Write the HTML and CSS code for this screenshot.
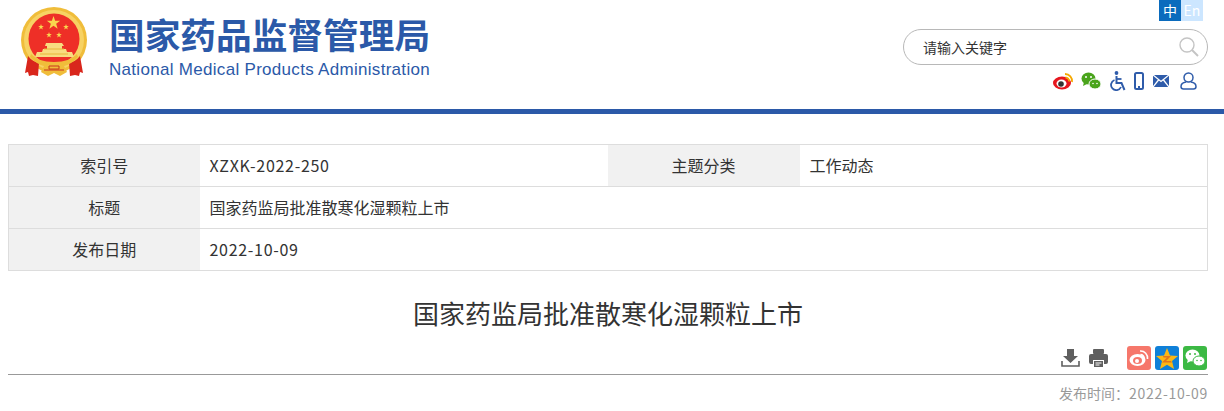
FILE: index.html
```html
<!DOCTYPE html>
<html lang="zh-CN">
<head>
  <meta charset="UTF-8" />
  <title>国家药监局批准散寒化湿颗粒上市</title>
  <link rel="stylesheet" href="styles.css">
</head>
<body>
  <header class="header">
    <div class="brand">
      <svg class="emblem" width="68" height="72" viewBox="0 0 68 72">
        <defs>
          <path id="star" d="M0-10L2.350-3.240 9.510-3.090 3.800 1.240 5.880 8.090 0 4-5.880 8.090-3.800 1.240-9.510-3.090-2.350-3.240Z"/>
        </defs>
        <circle cx="34" cy="34" r="33" fill="#f0bd3a"/>
        <circle cx="34" cy="34" r="30" fill="#f7d263"/>
        <circle cx="34" cy="33" r="25.500" fill="#ee2f27"/>
        <g fill="#f9d64e">
          <use href="#star" transform="translate(33.500 17) scale(.7)"/>
          <use href="#star" transform="translate(21 21) scale(.3)"/>
          <use href="#star" transform="translate(46 21) scale(.3)"/>
          <use href="#star" transform="translate(29 29) scale(.3)"/>
          <use href="#star" transform="translate(39 29) scale(.3)"/>
        </g>
        <path d="M26 37h16l2 3h-2v3h4l1 3h5l2 5H15l2-5h5l1-3h4v-3h-2z" fill="#f8dc80"/>
        <path d="M24 43h20M20 48h28" stroke="#e8b63a" fill="none"/>
        <path d="M8 50c3 4 7 6 11 7l-1 13-5-1-4 1-1-4-3 1z" fill="#d9261c"/>
        <path d="M60 50c-3 4-7 6-11 7l1 13 5-1 4 1 1-4 3 1z" fill="#d9261c"/>
        <path d="M11 48c5 5 12 8 23 8s18-3 23-8l1 3c-4 5-10 8-14 9l3 6-7 4-6-3-6 3-7-4 3-6c-4-1-10-4-14-9z" fill="#f0bd3a"/>
        <path d="M29 60h10v3H29zM24 64h20" stroke="#c9361f" stroke-width="1" fill="none"/>
      </svg>
      <div class="brand-text">
        <div class="brand-cn">国家药品监督管理局</div>
        <div class="brand-en">National Medical Products Administration</div>
      </div>
    </div>
    <div class="tools">
      <div class="lang"><span class="lang-on">中</span><span class="lang-off">En</span></div>
      <div class="search">
        <span class="search-text">请输入关键字</span>
        <svg width="20" height="20" viewBox="0 0 20 20" fill="none" stroke="#c4c4c4">
          <circle cx="8" cy="8" r="7" stroke-width="1.400"/>
          <path d="M13 13l6 6" stroke-width="2"/>
        </svg>
      </div>
      <div class="links">
        <svg class="ic-weibo" width="21" height="18" viewBox="0 0 21 18">
          <ellipse cx="9" cy="11" rx="9" ry="6.500" fill="#e6161e"/>
          <ellipse cx="8.500" cy="11.500" rx="5" ry="4" fill="#fff"/>
          <circle cx="8" cy="12" r="2.800" fill="#333"/>
          <path d="M12 2a7 7 0 0 1 7 8M12.500 5.500a3.500 3.500 0 0 1 3.500 4" fill="none" stroke="#f5a800" stroke-width="1.800"/>
        </svg>
        <svg class="ic-wechat" width="20" height="18" viewBox="0 0 20 18">
          <ellipse cx="7.500" cy="6.500" rx="7" ry="6" fill="#4aa41c"/>
          <path d="M3 10l-1 4 4-2z" fill="#4aa41c"/>
          <ellipse cx="14" cy="12" rx="6" ry="5" fill="#4aa41c" stroke="#fff"/>
          <circle cx="5" cy="5" r="1" fill="#fff"/><circle cx="10" cy="5" r="1" fill="#fff"/>
          <circle cx="12" cy="11.500" r=".8" fill="#fff"/><circle cx="16" cy="11.500" r=".8" fill="#fff"/>
        </svg>
        <svg class="ic-access" width="17" height="20" viewBox="0 0 17 20" fill="none" stroke="#2f5caa" stroke-width="1.800">
          <circle cx="6.500" cy="2" r="1.900" fill="#2f5caa" stroke="none"/>
          <path d="M6.500 5v7h5l3 7" stroke-width="2"/>
          <path d="M6.500 8h5"/>
          <path d="M4.500 9a5.200 5.200 0 1 0 6.500 7"/>
        </svg>
        <svg class="ic-phone" width="10" height="18" viewBox="0 0 10 18">
          <rect x="1" y="1" width="8" height="16" rx="1.500" fill="#fff" stroke="#2f5caa" stroke-width="2"/>
          <rect x="4" y="14" width="2" height="2" fill="#2f5caa"/>
        </svg>
        <svg class="ic-mail" width="16" height="12" viewBox="0 0 16 12">
          <rect width="16" height="12" fill="#2f5caa"/>
          <path d="M0 0l8 6.500L16 0M0 12l5.500-7M16 12l-5.500-7" fill="none" stroke="#fff" stroke-width="1.300"/>
        </svg>
        <svg class="ic-user" width="17" height="18" viewBox="0 0 17 18" fill="none" stroke="#2f5caa" stroke-width="1.500">
          <circle cx="8.500" cy="5.500" r="4.500"/>
          <path d="M6 10c-3 .5-5 2.500-5 4.500 0 1.500 1 2.500 2.500 2.500h10c1.500 0 2.500-1 2.500-2.500 0-2-2-4-5-4.500"/>
        </svg>
      </div>
    </div>
  </header>

  <main class="content">
    <table class="meta">
      <tr>
        <th class="col-a">索引号</th><td class="col-b num">XZXK-2022-250</td>
        <th class="col-c">主题分类</th><td>工作动态</td>
      </tr>
      <tr>
        <th>标题</th><td colspan="3">国家药监局批准散寒化湿颗粒上市</td>
      </tr>
      <tr>
        <th>发布日期</th><td colspan="3" class="num">2022-10-09</td>
      </tr>
    </table>

    <h1 class="title">国家药监局批准散寒化湿颗粒上市</h1>

    <div class="actions">
      <svg class="act-download" width="19" height="18" viewBox="0 0 19 18" fill="#5f5f5f">
        <path d="M6 0h7v7h4l-7.500 7L2 7h4z"/>
        <path d="M1 12v5h17v-5" fill="none" stroke="#5f5f5f" stroke-width="1.600"/>
      </svg>
      <svg class="act-print" width="19" height="18" viewBox="0 0 19 18" fill="#5f5f5f">
        <rect x="4" y="0" width="11" height="5" rx="1"/>
        <path d="M2 5h15a2 2 0 0 1 2 2v6a2 2 0 0 1-2 2h-2v-4H4v4H2a2 2 0 0 1-2-2V7a2 2 0 0 1 2-2z"/>
        <rect x="5" y="12" width="9" height="6" fill="#5f5f5f"/>
        <path d="M6.500 14h6M6.500 16h4" stroke="#fff"/>
      </svg>
      <span class="share share-weibo">
        <svg width="20" height="18" viewBox="0 0 20 18">
          <ellipse cx="8.500" cy="11" rx="8" ry="6" fill="#fff"/>
          <ellipse cx="8.500" cy="11.500" rx="4.500" ry="3.500" fill="#f6776b"/>
          <circle cx="8" cy="12" r="2" fill="#fff"/>
          <path d="M11 2a7 7 0 0 1 7.500 8M11.500 5.500a3.500 3.500 0 0 1 3.500 4" fill="none" stroke="#fff" stroke-width="1.600"/>
        </svg>
      </span>
      <span class="share share-qzone">
        <svg width="22" height="21" viewBox="0 0 22 21">
          <path d="M11 0l3 7.500 8 .5-6 5 2 8-7-4.300L4 21l2-8-6-5 8-.5z" fill="#fbb714"/>
          <path d="M7 8h8l-5 5h5l1 1.500H6l5-5H7.500z" fill="#e2761a"/>
        </svg>
      </span>
      <span class="share share-wechat">
        <svg width="20" height="18" viewBox="0 0 20 18">
          <ellipse cx="7.500" cy="6.500" rx="7" ry="6" fill="#fff"/>
          <path d="M3 10l-1 4 4-2z" fill="#fff"/>
          <ellipse cx="14" cy="12" rx="6" ry="5" fill="#fff" stroke="#3cb944"/>
          <circle cx="5" cy="5" r="1" fill="#3cb944"/><circle cx="10" cy="5" r="1" fill="#3cb944"/>
          <circle cx="12" cy="11.500" r=".8" fill="#3cb944"/><circle cx="16" cy="11.500" r=".8" fill="#3cb944"/>
        </svg>
      </span>
    </div>
    <div class="pubtime">发布时间：<span class="num">2022-10-09</span></div>
  </main>
</body>
</html>
```

FILE: styles.css
```css
* { margin: 0; padding: 0; box-sizing: border-box; }
body {
  font-family: "Noto Sans CJK SC", "Liberation Sans", sans-serif;
  background: #fff;
  color: #333;
  overflow: hidden;
}

.header {
  height: 114px;
  border-bottom: 5px solid #2b59a8;
  display: flex;
  justify-content: space-between;
  padding: 0 16px 0 20px;
}
.brand {
  display: flex;
  align-items: flex-start;
}
.emblem { margin-top: 6px; }
.brand-text { margin-left: 21px; }
.brand-cn {
  margin-top: 9px;
  font-size: 35.700px;
  line-height: 50px;
  font-weight: 700;
  color: #2b59a8;
  white-space: nowrap;
}
.brand-en {
  margin-top: 2px;
  font-family: "Liberation Sans", sans-serif;
  font-size: 17px;
  line-height: 18px;
  color: #2b59a8;
  letter-spacing: .3px;
  white-space: nowrap;
}

.tools {
  width: 305px;
  display: flex;
  flex-direction: column;
}
.lang {
  display: flex;
  align-self: flex-end;
  margin-right: 5px;
  font-size: 14px;
  line-height: 21px;
  text-align: center;
  color: #fff;
}
.lang span { width: 22px; height: 21px; }
.lang-on { background: #0a6bbd; }
.lang-off { background: #cce6ff; }
.search {
  margin-top: 8px;
  height: 36px;
  border: 1px solid #b8b8b8;
  border-radius: 18px;
  display: flex;
  align-items: center;
  justify-content: space-between;
  padding: 0 8px 0 19px;
}
.search-text { font-size: 14px; color: #333; }
.links {
  margin-top: 5px;
  display: flex;
  align-items: center;
  padding-left: 150px;
  height: 22px;
}
.ic-wechat { margin-left: 7px; }
.ic-access { margin-left: 9px; }
.ic-phone { margin-left: 7px; }
.ic-mail { margin-left: 9px; }
.ic-user { margin-left: 11px; }

.content { padding: 30px 16px 0 8px; }
.meta {
  width: 1200px;
  border-collapse: collapse;
  border: 1px solid #ddd;
  table-layout: fixed;
  font-size: 16px;
}
.meta tr { height: 42px; border-bottom: 1px solid #ddd; }
.meta th, .meta td { padding-bottom: 2px; }
.meta th {
  background: #f1f1f1;
  font-weight: 400;
  text-align: center;
}
.meta td { padding-left: 10px; }
.col-a { width: 191px; }
.col-b { width: 408px; }
.col-c { width: 192px; }
.num { letter-spacing: .7px; }

.title {
  font-size: 26px;
  font-weight: 400;
  line-height: 36px;
  text-align: center;
  margin-top: 24px;
  color: #333;
}

.actions {
  margin-top: 15px;
  height: 29px;
  border-bottom: 1px solid #999;
  padding-right: 1px;
  display: flex;
  justify-content: flex-end;
  align-items: flex-start;
}
.act-download { margin-top: 3px; }
.act-print { margin: 3px 0 0 9px; }
.share {
  width: 24px;
  height: 24px;
  border-radius: 3px;
  margin-left: 4px;
  display: flex;
  align-items: center;
  justify-content: center;
}
.share-weibo { background: #f6776b; margin-left: 19px; }
.share-qzone { background: #0f80d8; }
.share-wechat { background: #3cb944; }

.pubtime {
  margin-top: 7px;
  text-align: right;
  font-size: 14px;
  line-height: 22px;
  color: #999;
}
```
